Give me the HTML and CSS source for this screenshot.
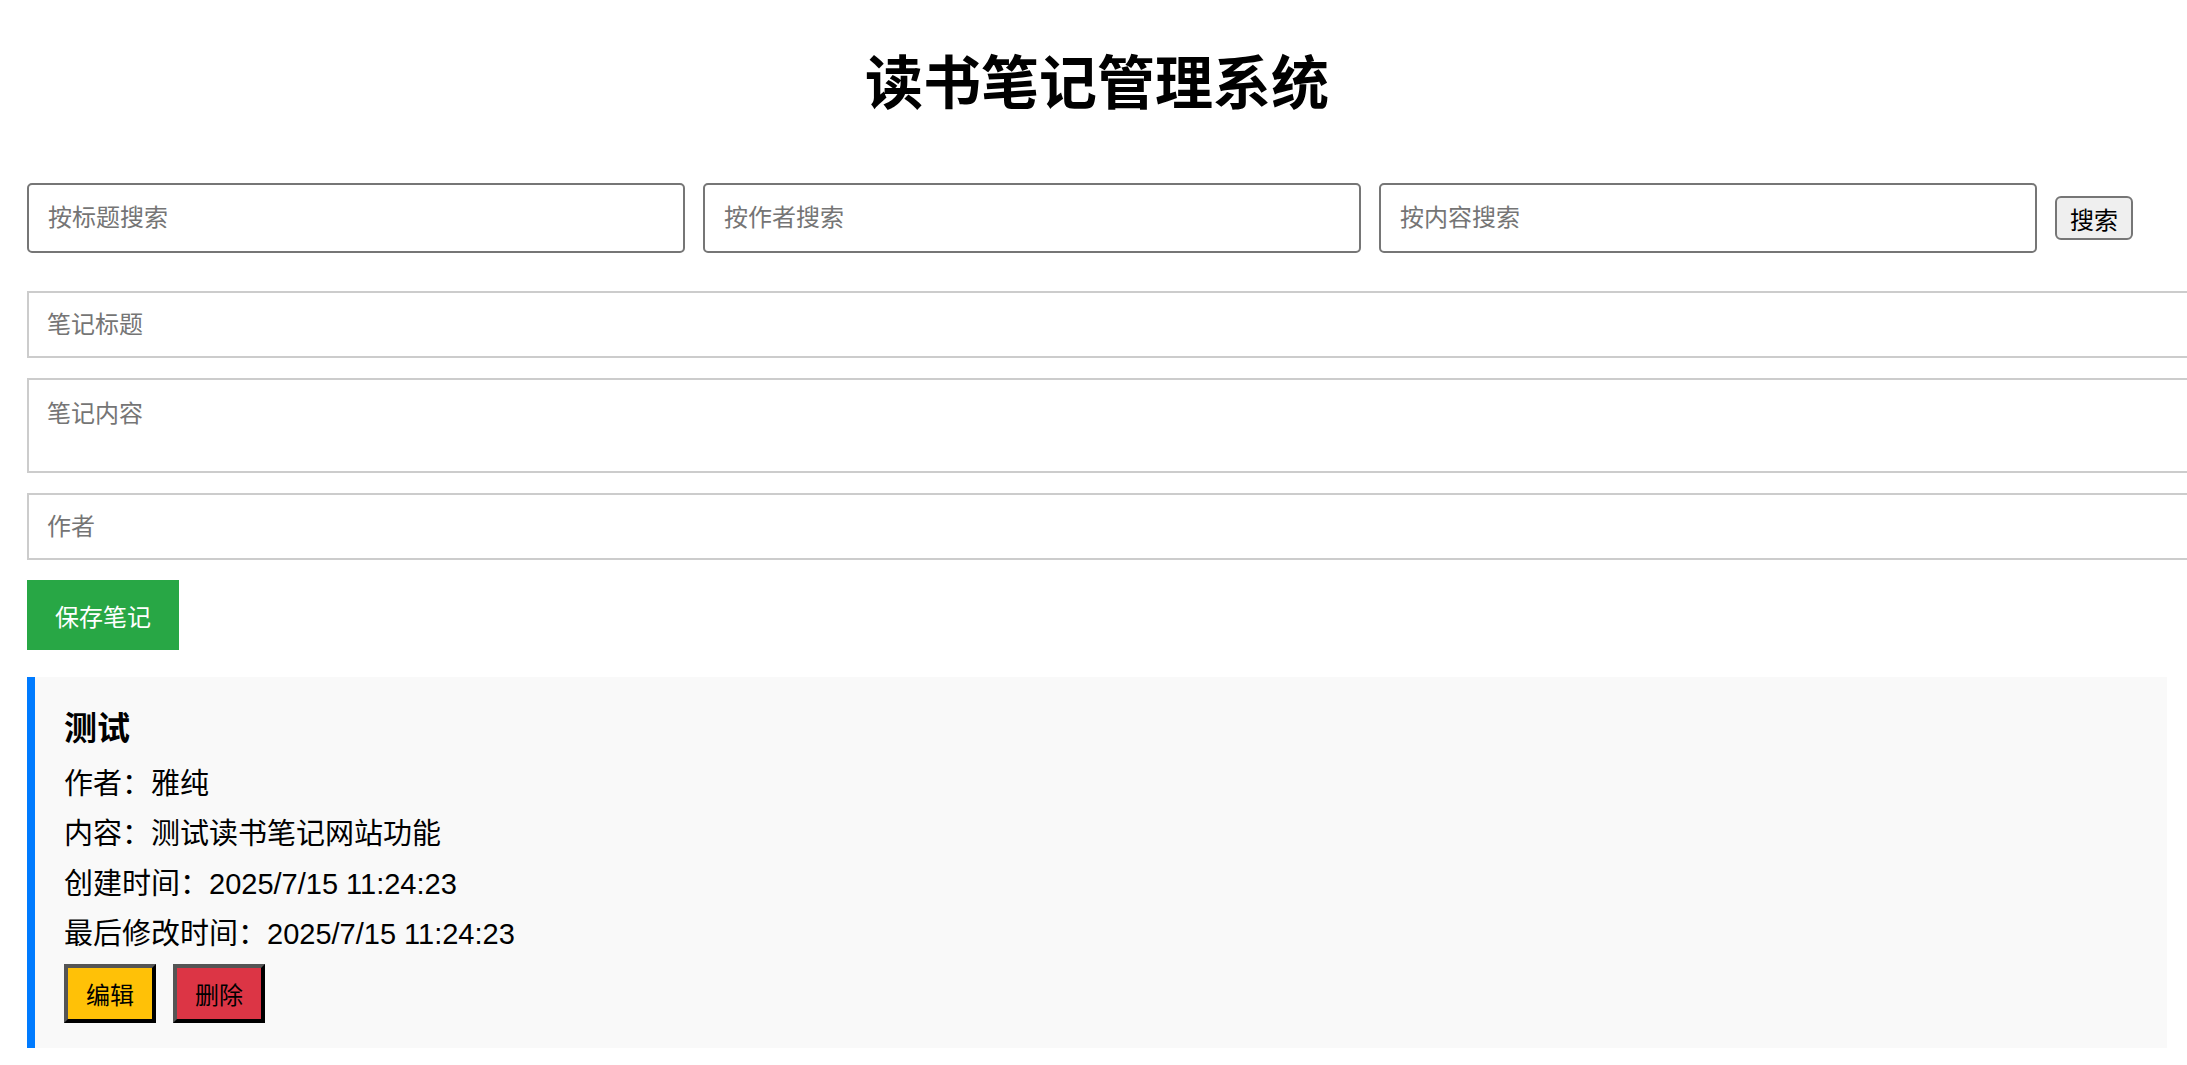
FILE: index.html
```html
<!DOCTYPE html>
<html lang="zh-CN">
<head>
  <meta charset="UTF-8" />
  <title>读书笔记管理系统</title>
  <meta name="viewport" content="width=device-width, initial-scale=1.0" />
  <link rel="stylesheet" href="styles.css">
</head>
<body>
  <h1>读书笔记管理系统</h1>

  <div class="search-bar">
    <input type="text" id="searchTitle" placeholder="按标题搜索" />
    <input type="text" id="searchAuthor" placeholder="按作者搜索" />
    <input type="text" id="searchContent" placeholder="按内容搜索" />
    <button class="search-btn">搜索</button>
  </div>

  <form class="note-form" id="noteForm">
    <input type="text" id="noteTitle" placeholder="笔记标题" />
    <textarea id="noteContent" placeholder="笔记内容"></textarea>
    <input type="text" id="noteAuthor" placeholder="作者" />
    <button type="submit" class="save-btn">保存笔记</button>
  </form>

  <div class="note-list">
    <div class="note">
      <h3>测试</h3>
      <p>作者：雅纯</p>
      <p>内容：测试读书笔记网站功能</p>
      <p>创建时间：2025/7/15 11:24:23</p>
      <p>最后修改时间：2025/7/15 11:24:23</p>
      <div class="note-actions">
        <button class="edit-btn">编辑</button>
        <button class="delete-btn">删除</button>
      </div>
    </div>
  </div>
</body>
</html>
```

FILE: styles.css
```css
* {
  font-family: "Liberation Sans", "Noto Sans CJK SC", sans-serif;
}

body {
  margin: 0;
  padding: 0 20px 0 27px;
  background-color: #fff;
  color: #000;
  overflow: hidden;
}

h1 {
  margin: 49px 0 64px;
  font-size: 58px;
  line-height: 70px;
  font-weight: bold;
  text-align: center;
}

/* search row */
.search-bar {
  display: flex;
  align-items: center;
  gap: 18px;
  margin-bottom: 38px;
}

.search-bar input {
  width: 658px;
  height: 70px;
  box-sizing: border-box;
  padding: 0 19px;
  border: 2px solid #767676;
  border-radius: 5px;
  font-size: 24px;
  background-color: #fff;
}

.search-btn {
  height: 44px;
  padding: 0 13px;
  border: 2px solid #767676;
  border-radius: 6px;
  background-color: #efefef;
  color: #000;
  font-size: 24px;
}

/* note form */
.note-form {
  display: flex;
  flex-direction: column;
  align-items: flex-start;
  gap: 20px;
  margin-bottom: 27px;
}

.note-form input,
.note-form textarea {
  width: 100%;
  box-sizing: content-box;
  padding: 0 18px;
  border: 2px solid #ccc;
  font-size: 24px;
  background-color: #fff;
}

.note-form input {
  height: 63px;
}

.note-form textarea {
  height: 55px;
  padding: 18px;
  line-height: 32px;
  resize: none;
}

input::placeholder,
textarea::placeholder {
  color: #757575;
}

.save-btn {
  height: 70px;
  padding: 0 28px;
  border: none;
  background-color: #28a745;
  color: #fff;
  font-size: 24px;
}

/* note cards */
.note {
  background-color: #f9f9f9;
  border-left: 8px solid #007bff;
  padding: 31px 29px 25px;
}

.note h3 {
  margin: 0 0 14px;
  font-size: 33px;
  line-height: 42px;
}

.note p {
  margin: 0 0 10px;
  font-size: 29px;
  line-height: 40px;
}

.note-actions {
  display: flex;
  gap: 17px;
}

.note-actions button {
  height: 59px;
  padding: 0 18px;
  border-width: 4px;
  border-style: solid;
  border-color: #555 #000 #000 #555;
  color: #000;
  font-size: 24px;
}

.edit-btn {
  background-color: #ffc107;
}

.delete-btn {
  background-color: #dc3545;
}
```
